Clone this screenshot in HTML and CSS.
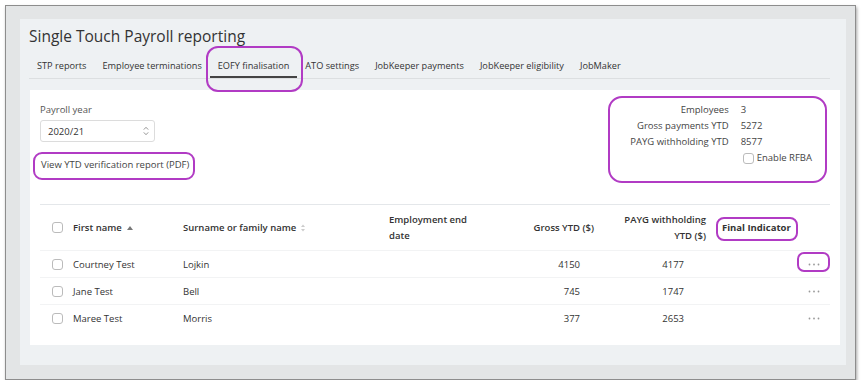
FILE: index.html
```html
<!DOCTYPE html>
<html>
<head>
    <meta charset="UTF-8">
    <title>Single Touch Payroll reporting</title>
    <link rel="stylesheet" href="styles.css">
</head>
<body>
<div class="window">
    <div class="page">
        <h1 class="title">Single Touch Payroll reporting</h1>

        <!-- Tabs -->
        <nav class="tabs">
            <span class="tab">STP reports</span>
            <span class="tab">Employee terminations</span>
            <span class="tab active">EOFY finalisation<span class="callout callout-tab"></span></span>
            <span class="tab">ATO settings</span>
            <span class="tab">JobKeeper payments</span>
            <span class="tab">JobKeeper eligibility</span>
            <span class="tab">JobMaker</span>
        </nav>

        <div class="card">
            <div class="top">
                <div class="year">
                    <div class="label">Payroll year</div>
                    <div class="select">
                        <span>2020/21</span>
                        <svg width="6" height="10" viewBox="0 0 6 10"><path d="M0.8 3.6 L3 1.3 L5.2 3.6 M0.8 6.4 L3 8.7 L5.2 6.4" fill="none" stroke="#888" stroke-width="0.9"/></svg>
                    </div>
                    <a class="report-link">View YTD verification report (PDF)<span class="callout callout-link"></span></a>
                </div>

                <div class="totals">
                    <span class="callout callout-totals"></span>
                    <div class="k">Employees</div><div class="v">3</div>
                    <div class="k">Gross payments YTD</div><div class="v">5272</div>
                    <div class="k">PAYG withholding YTD</div><div class="v">8577</div>
                    <div></div><label class="v rfba"><span class="check"></span>Enable RFBA</label>
                </div>
            </div>

            <!-- Employees table -->
            <div class="table">
                <div class="row head">
                    <div class="cb"><span class="check"></span></div>
                    <div>First name<svg class="sort" width="6" height="4" viewBox="0 0 6 4"><path d="M0 4 L3 0 L6 4 Z" fill="#777"/></svg></div>
                    <div>Surname or family name<svg class="sort" width="4" height="8" viewBox="0 0 4 8"><path d="M0 3 L2 0.5 L4 3 Z M0 5 L2 7.5 L4 5 Z" fill="#ccc"/></svg></div>
                    <div class="two">Employment end<br>date</div>
                    <div class="num">Gross YTD ($)</div>
                    <div class="num two">PAYG withholding<br>YTD ($)</div>
                    <div class="final"><span class="final-text">Final Indicator<span class="callout callout-final"></span></span></div>
                    <div></div>
                </div>
                <div class="row">
                    <div class="cb"><span class="check"></span></div>
                    <div>Courtney Test</div>
                    <div>Lojkin</div>
                    <div></div>
                    <div class="num gross">4150</div>
                    <div class="num payg">4177</div>
                    <div></div>
                    <div class="more"><svg width="12" height="3" viewBox="0 0 12 3"><circle cx="1.5" cy="1.5" r="0.9" fill="#999"/><circle cx="6" cy="1.5" r="0.9" fill="#999"/><circle cx="10.5" cy="1.5" r="0.9" fill="#999"/></svg><span class="callout callout-more"></span></div>
                </div>
                <div class="row">
                    <div class="cb"><span class="check"></span></div>
                    <div>Jane Test</div>
                    <div>Bell</div>
                    <div></div>
                    <div class="num gross">745</div>
                    <div class="num payg">1747</div>
                    <div></div>
                    <div class="more"><svg width="12" height="3" viewBox="0 0 12 3"><circle cx="1.5" cy="1.5" r="0.9" fill="#999"/><circle cx="6" cy="1.5" r="0.9" fill="#999"/><circle cx="10.5" cy="1.5" r="0.9" fill="#999"/></svg></div>
                </div>
                <div class="row">
                    <div class="cb"><span class="check"></span></div>
                    <div>Maree Test</div>
                    <div>Morris</div>
                    <div></div>
                    <div class="num gross">377</div>
                    <div class="num payg">2653</div>
                    <div></div>
                    <div class="more"><svg width="12" height="3" viewBox="0 0 12 3"><circle cx="1.5" cy="1.5" r="0.9" fill="#999"/><circle cx="6" cy="1.5" r="0.9" fill="#999"/><circle cx="10.5" cy="1.5" r="0.9" fill="#999"/></svg></div>
                </div>
            </div>
        </div>
    </div>
</div>
</body>
</html>
```

FILE: styles.css
```css
* { box-sizing: border-box; }
body { margin: 0; background: #fff; font-family: "Open Sans", "Noto Sans", sans-serif; font-size: 9.5px; color: #333; }

.window { margin: 5px 0 0 5px; width: 851px; height: 375px; padding: 13px 9px 14px 14px; border: 1px solid #8d8d8d; background: #e3e5e6; box-shadow: 1px 2px 3px rgba(0,0,0,0.35); }
.page { height: 346px; background: #eef1f3; padding: 7px 6px 0 9px; }
.title { margin: 0 0 4px; font-size: 15.5px; line-height: 20px; font-weight: 400; color: #333; }

.tabs { display: flex; border-bottom: 1px solid #dcdfe1; margin-right: 10px; }
.tab { position: relative; padding: 8px 8px 2px; font-size: 9.2px; line-height: 16px; border-bottom: 2px solid transparent; color: #333; }
.tab.active { border-bottom-color: #444; }

.callout { position: absolute; border: 2.5px solid #b13bc4; border-radius: 10px; pointer-events: none; }
.callout-tab { left: -4px; right: -6px; top: -4px; bottom: -16px; border-radius: 12px; }
.callout-link { left: -8px; right: -6px; top: -5px; bottom: -7px; border-radius: 9px; }
.callout-totals { left: -22px; right: -15px; top: -6px; bottom: -17px; border-radius: 14px; }
.callout-final { left: -6px; right: -7px; top: -4px; bottom: -7px; border-radius: 8px; }
.callout-more { left: 0; right: 0; top: 1px; bottom: 5px; border-radius: 7px; }

.card { margin: 11px 0 0 1px; height: 255px; background: #fff; padding: 12px 10px 14px; }
.top { display: flex; justify-content: space-between; align-items: flex-start; }
.label { line-height: 16px; color: #555; }
.select { margin-top: 2px; width: 115px; height: 22px; border: 1px solid #dcdcdc; border-radius: 3px; display: flex; align-items: center; justify-content: space-between; padding: 0 5px 0 7px; }
.report-link { position: relative; display: inline-block; margin: 15px 0 0 1px; line-height: 16px; color: #444; }

.totals { position: relative; display: grid; grid-template-columns: auto auto; column-gap: 12px; line-height: 16px; margin-right: 18px; }
.k { text-align: right; color: #444; }
.v { color: #444; }
.rfba { display: flex; align-items: center; margin-left: 2px; }
.rfba .check { margin-right: 3px; }

.check { display: inline-block; width: 11px; height: 11px; border: 1px solid #bbb; border-radius: 3px; background: #fff; }

.table { margin-top: 31px; border-top: 1px solid #e4e7ea; }
.row { display: grid; grid-template-columns: 33px 110px 206px 111px 94px 112px 91px 33px; align-items: center; height: 27px; border-top: 1px solid #f2f3f4; }
.row.head { height: 45px; border-top: none; font-weight: 600; line-height: 16px; }
.cb { padding-left: 12px; display: flex; align-items: center; }
.sort { margin-left: 5px; vertical-align: middle; }
.num { text-align: right; }
.gross { padding-right: 14px; }
.payg { padding-right: 22px; }
.final { padding-left: 16px; }
.final-text { position: relative; font-weight: 700; }
.more { position: relative; height: 100%; display: flex; align-items: center; justify-content: center; }
```
